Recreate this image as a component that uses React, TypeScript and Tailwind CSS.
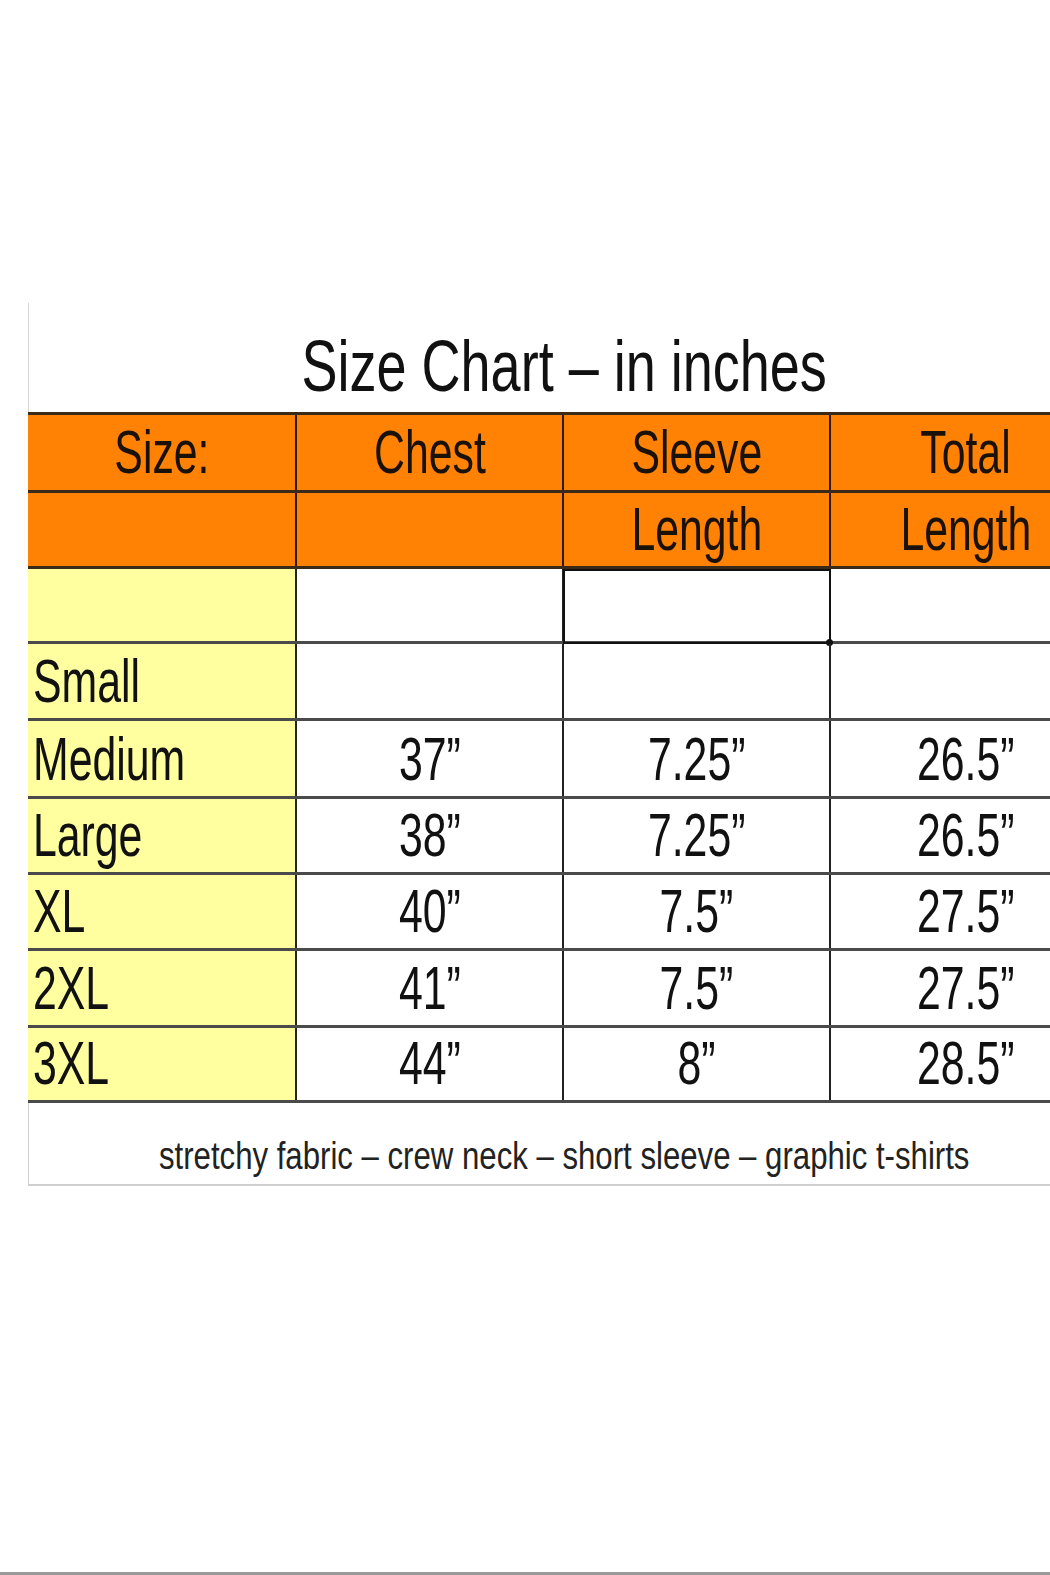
import React from "react";

const font = { fontFamily: "'Liberation Sans', Arial, sans-serif" };

type Row = { h: string; label: string; vals: string[] };

const rows: Row[] = [
  { h: "h-[75px]", label: "", vals: ["", "", ""] },
  { h: "h-[77px]", label: "Small", vals: ["", "", ""] },
  { h: "h-[78px]", label: "Medium", vals: ["37”", "7.25”", "26.5”"] },
  { h: "h-[76px]", label: "Large", vals: ["38”", "7.25”", "26.5”"] },
  { h: "h-[76px]", label: "XL", vals: ["40”", "7.5”", "27.5”"] },
  { h: "h-[77px]", label: "2XL", vals: ["41”", "7.5”", "27.5”"] },
  { h: "h-[75px]", label: "3XL", vals: ["44”", "8”", "28.5”"] },
];

function Narrow({ children, left }: { children: React.ReactNode; left?: boolean }) {
  return (
    <span className={`inline-block whitespace-nowrap scale-x-[0.69] ${left ? "origin-left" : "origin-center"}`}>
      {children}
    </span>
  );
}

const cols = "grid grid-cols-[269px_267px_267px_269px]";

export default function App() {
  return (
    <div className="relative w-[1050px] h-[1575px] overflow-hidden bg-white" style={font}>
      <div className="pt-[303px] pl-[28px]">
        <div className="w-[1072px]">
          <div className="h-[109px] border-l border-[#d4d4d4] flex items-end justify-center">
            <div className="text-[72px] leading-none pb-[10px] text-[#111]">
              <span className="inline-block whitespace-nowrap scale-x-[0.75] origin-center">Size Chart – in inches</span>
            </div>
          </div>
          {/* header */}
          <div className="border-t-[3px] border-[#3a2a1a] bg-[#ff8204]">
            <div className={`${cols} h-[78px] border-b-[3px] border-[#3a2a1a]`}>
              {["Size:", "Chest", "Sleeve", "Total"].map((t, i) => (
                <div
                  key={i}
                  className={`flex items-end justify-center pb-[7px] text-[62px] leading-none text-[#1a1208] ${i < 3 ? "border-r-[2px] border-[#2a1a0a]" : ""}`}
                >
                  <Narrow>{t}</Narrow>
                </div>
              ))}
            </div>
            <div className={`${cols} h-[76px] border-b-[3px] border-[#3a2a1a]`}>
              {["", "", "Length", "Length"].map((t, i) => (
                <div
                  key={i}
                  className={`flex items-end justify-center pb-[6px] text-[62px] leading-none text-[#1a1208] ${i < 3 ? "border-r-[2px] border-[#2a1a0a]" : ""}`}
                >
                  <Narrow>{t}</Narrow>
                </div>
              ))}
            </div>
          </div>
          {rows.map((r, ri) => (
            <div key={ri} className={`${cols} ${r.h} border-b-[3px] border-[#4a4a4a]`}>
              <div className="bg-[#ffff9f] border-r-[2px] border-[#222] flex items-end pl-[5px] pb-[6px] text-[62px] leading-none text-[#111]">
                <Narrow left>{r.label}</Narrow>
              </div>
              {r.vals.map((v, vi) => (
                <div
                  key={vi}
                  className={`relative flex items-end justify-center pb-[6px] text-[62px] leading-none text-[#111] ${vi < 2 ? "border-r-[2px] border-[#222]" : ""}`}
                >
                  {ri === 0 && vi === 1 ? (
                    <div className="absolute -left-[1px] top-0 right-[-2px] bottom-[-3px] border-[2px] border-[#111]">
                      <div className="absolute -right-[4px] -bottom-[4px] w-[7px] h-[7px] rounded-full bg-[#111]" />
                    </div>
                  ) : null}
                  <Narrow>{v}</Narrow>
                </div>
              ))}
            </div>
          ))}
          <div className="h-[83px] border-l border-b-[2px] border-[#d0d0d0] flex items-end justify-center pb-[9px]">
            <div className="text-[38px] leading-none text-[#222]">
              <span className="inline-block whitespace-nowrap scale-x-[0.82] origin-center">
                stretchy fabric – crew neck – short sleeve – graphic t-shirts
              </span>
            </div>
          </div>
        </div>
      </div>
      <div className="absolute left-0 right-0 bottom-0 h-[3px] bg-[#9a9a9a]" />
    </div>
  );
}
